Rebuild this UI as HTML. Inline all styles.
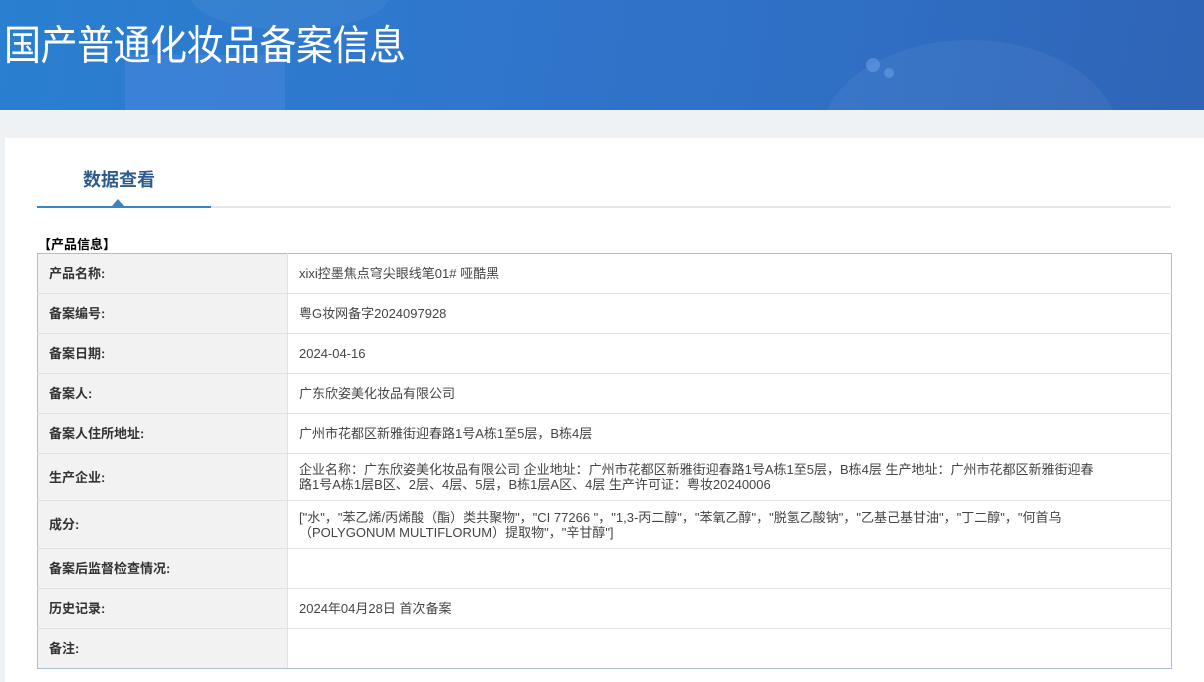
<!DOCTYPE html>
<html><head><meta charset="utf-8"><style>
*{margin:0;padding:0;box-sizing:border-box}
body{width:1204px;height:682px;overflow:hidden;background:#eef2f5;font-family:"Liberation Sans","Noto Sans CJK SC",sans-serif;color:#333}
.hd{position:absolute;left:0;top:0;width:1204px;height:110px;background:linear-gradient(100deg,#2a7fd0 0%,#2f76cc 40%,#2f6fc4 70%,#2f64b6 100%);overflow:hidden}
.hd h1{position:absolute;left:4px;top:12px;font-size:37px;font-weight:normal;color:#fff;letter-spacing:-0.5px;font-family:"Noto Sans CJK SC",sans-serif;transform:scaleY(1.1);transform-origin:left top}
.c1{position:absolute;left:125px;top:55px;width:160px;height:80px;background:rgba(90,140,230,.35);border-radius:6px}
.c2{position:absolute;left:820px;top:40px;width:300px;height:200px;border-radius:50%;background:rgba(255,255,255,.05)}
.c3{position:absolute;left:190px;top:-40px;width:200px;height:70px;border-radius:50%;background:rgba(255,255,255,.05)}
.dot{position:absolute;border-radius:50%;background:rgba(120,170,240,.45)}
.pn{position:absolute;left:5px;top:138px;width:1199px;height:544px;background:#fff}
.tab{position:absolute;left:83px;top:166px;font-size:18px;font-weight:bold;color:#2d5b8c}
.ln{position:absolute;left:37px;top:206px;width:1134px;height:2px;background:#e6e6e6}
.lb{position:absolute;left:37px;top:206px;width:174px;height:2px;background:#3a84c0}
.tri{position:absolute;left:112px;top:199px;width:0;height:0;border-left:6px solid transparent;border-right:6px solid transparent;border-bottom:7px solid #3a84c0}
.sec{position:absolute;left:38px;top:234px;font-size:13px;font-weight:bold;color:#000}
table{position:absolute;left:37px;top:253px;width:1135px;border-collapse:collapse;border:1px solid #a9bfd6;font-size:13px}
td{border-bottom:1px solid #e2e2e2;padding:0 11px;vertical-align:middle;line-height:15px}
td.l{width:250px;background:#f2f2f2;font-weight:bold;color:#333;border-right:1px solid #e2e2e2}
td.v{color:#444;padding-right:50px}
tr:last-child td{border-bottom:1px solid #a9bfd6}
</style></head><body>
<div class="hd"><div class="c3"></div><div class="c1"></div><div class="c2"></div>
<div class="dot" style="left:866px;top:58px;width:14px;height:14px"></div>
<div class="dot" style="left:884px;top:68px;width:10px;height:10px"></div>
<h1>国产普通化妆品备案信息</h1></div>
<div class="pn"></div>
<div class="tab">数据查看</div>
<div class="ln"></div><div class="lb"></div><div class="tri"></div>
<div class="sec">【产品信息】</div>
<table>
<tr style="height:40px"><td class="l">产品名称:</td><td class="v">xixi控墨焦点穹尖眼线笔01# 哑酷黑</td></tr>
<tr style="height:40px"><td class="l">备案编号:</td><td class="v">粤G妆网备字2024097928</td></tr>
<tr style="height:40px"><td class="l">备案日期:</td><td class="v">2024-04-16</td></tr>
<tr style="height:40px"><td class="l">备案人:</td><td class="v">广东欣姿美化妆品有限公司</td></tr>
<tr style="height:40px"><td class="l">备案人住所地址:</td><td class="v">广州市花都区新雅街迎春路1号A栋1至5层，B栋4层</td></tr>
<tr style="height:47px"><td class="l">生产企业:</td><td class="v">企业名称：广东欣姿美化妆品有限公司 企业地址：广州市花都区新雅街迎春路1号A栋1至5层，B栋4层 生产地址：广州市花都区新雅街迎春<br>路1号A栋1层B区、2层、4层、5层，B栋1层A区、4层 生产许可证：粤妆20240006</td></tr>
<tr style="height:48px"><td class="l">成分:</td><td class="v">["水"，"苯乙烯/丙烯酸（酯）类共聚物"，"CI 77266 "，"1,3-丙二醇"，"苯氧乙醇"，"脱氢乙酸钠"，"乙基己基甘油"，"丁二醇"，"何首乌<br>（POLYGONUM MULTIFLORUM）提取物"，"辛甘醇"]</td></tr>
<tr style="height:40px"><td class="l">备案后监督检查情况:</td><td class="v"></td></tr>
<tr style="height:40px"><td class="l">历史记录:</td><td class="v">2024年04月28日 首次备案</td></tr>
<tr style="height:40px"><td class="l">备注:</td><td class="v"></td></tr>
</table>
</body></html>
